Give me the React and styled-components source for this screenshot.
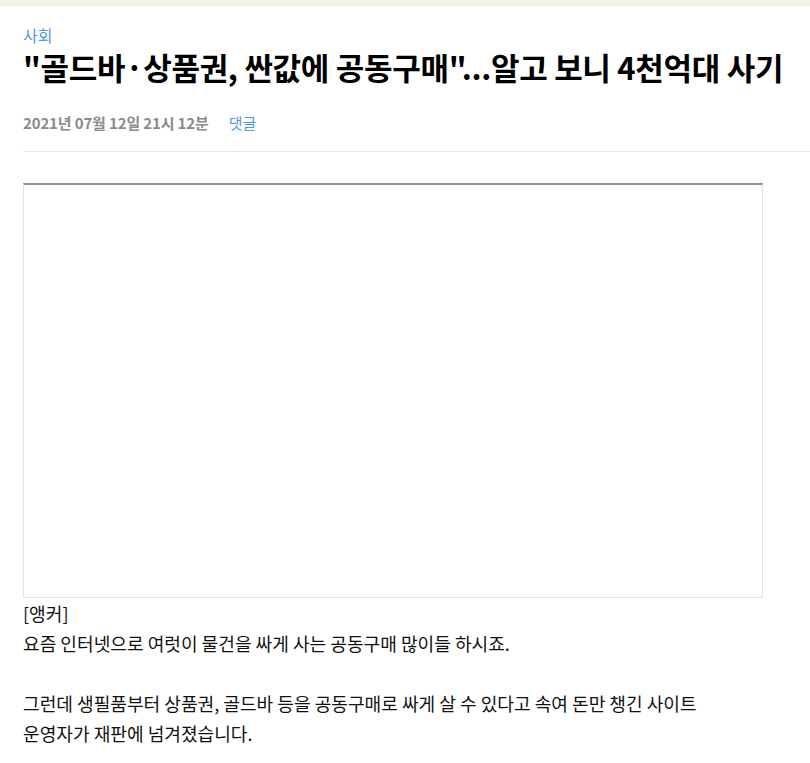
import styled, { createGlobalStyle } from "styled-components";

const GlobalStyle = createGlobalStyle`
  body {
    margin: 0;
    background: #fff;
    font-family: "Noto Sans CJK KR", "Noto Sans", sans-serif;
    color: #111;
  }
`;

const TopBar = styled.div`
  height: 6px;
  background: #f5f3e7;
`;

const Article = styled.article`
  padding-left: 23px;
`;

const Header = styled.header`
  padding-top: 19px;
  padding-bottom: 18px;
  border-bottom: 1px solid #e6e6e6;
`;

const Category = styled.div`
  font-size: 16px;
  line-height: 20px;
  color: #4e96e6;
`;

const Title = styled.h1`
  margin: 4px 0 0;
  font-size: 31px;
  line-height: 36px;
  font-weight: 700;
  letter-spacing: -0.3px;
  color: #000;
`;

const Meta = styled.div`
  display: flex;
  gap: 20px;
  margin-top: 28px;
  font-size: 15px;
  line-height: 20px;
`;

const Date = styled.span`
  font-weight: 700;
  color: #8a8a8a;
  letter-spacing: -0.15px;
`;

const CommentLink = styled.a`
  color: #4e96e6;
  text-decoration: none;
`;

const Media = styled.div`
  box-sizing: border-box;
  width: 740px;
  height: 415px;
  margin-top: 31px;
  border: 1px solid #e3e3e3;
  border-top: 2px solid #8a8d99;
  background: #fff;
`;

const Body = styled.div`
  width: 760px;
  font-size: 18.1px;
  line-height: 30px;
  color: #111;
`;

const Paragraph = styled.p`
  margin: 0 0 30px;
`;

export default function App() {
  return (
    <>
      <GlobalStyle />
      <TopBar />
      <Article>
        <Header>
          <Category>사회</Category>
          <Title>"골드바·상품권, 싼값에 공동구매"...알고 보니 4천억대 사기</Title>
          <Meta>
            <Date>2021년 07월 12일 21시 12분</Date>
            <CommentLink href="#">댓글</CommentLink>
          </Meta>
        </Header>
        <Media />
        <Body>
          <div>[앵커]</div>
          <Paragraph>요즘 인터넷으로 여럿이 물건을 싸게 사는 공동구매 많이들 하시죠.</Paragraph>
          <Paragraph>
            그런데 생필품부터 상품권, 골드바 등을 공동구매로 싸게 살 수 있다고 속여 돈만 챙긴 사이트
            <br />
            운영자가 재판에 넘겨졌습니다.
          </Paragraph>
        </Body>
      </Article>
    </>
  );
}
